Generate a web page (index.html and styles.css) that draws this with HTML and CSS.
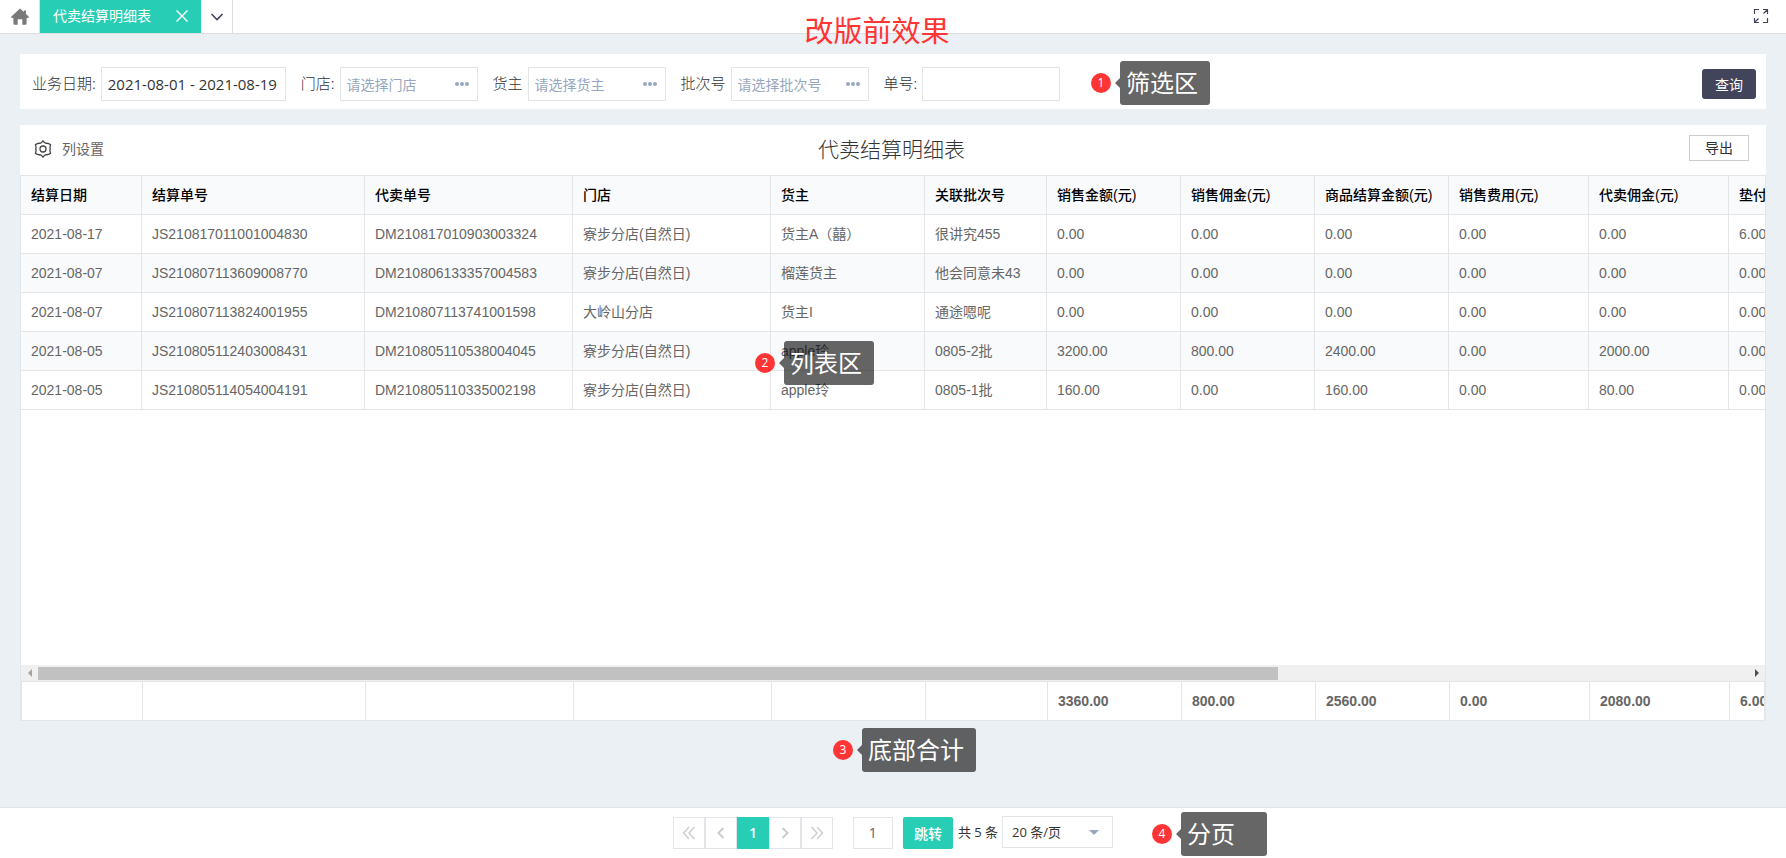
FILE: index.html
```html
<!DOCTYPE html>
<html lang="zh-CN">
<head>
<meta charset="utf-8">
<title>代卖结算明细表</title>
<link rel="stylesheet" href="styles.css">
</head>
<body>
<header class="topbar">
  <a class="home" href="#" aria-label="首页">
    <svg width="18" height="18" viewBox="0 0 18 18"><path fill="#7a7a7a" d="M9 .6 12.800 4V2.400H15V6L17.600 8.600V10H15.600V15.600Q15.600 16.800 14.400 16.800H11.300V11.200H6.700V16.800H3.600Q2.400 16.800 2.400 15.600V10H.4V8.600Z"/></svg>
  </a>
  <div class="tab">
    <span>代卖结算明细表</span>
    <button class="tab-close" aria-label="关闭"><svg width="12" height="12" viewBox="0 0 12 12"><path d="M.5.5l11 11M11.500.500l-11 11" stroke="#fff" stroke-width="1.400" fill="none"/></svg></button>
  </div>
  <button class="tab-more" aria-label="更多"><svg width="14" height="8" viewBox="0 0 14 8"><path d="M1.500 1 7 6.500 12.500 1" stroke="#41445b" stroke-width="1.600" fill="none"/></svg></button>
  <button class="fullscreen" aria-label="全屏"><svg width="16" height="16" viewBox="0 0 16 16"><path d="M1.500 6V1.500H6M10 1.500h4.500V6M14.500 1.500 10.500 5.500M14.500 10v4.500H10M6 14.500H1.500V10M1.500 14.500l4-4" stroke="#41445b" stroke-width="1.200" fill="none"/></svg></button>
</header>
<h1 class="caption">改版前效果</h1>

<main class="page">
  <form class="filters">
    <div class="field"><label for="date">业务日期:</label><input class="date" id="date" value="2021-08-01 - 2021-08-19"></div>
    <div class="field"><label for="store">门店:</label><div class="picker"><input id="store" placeholder="请选择门店"><i></i><i></i><i></i></div></div>
    <div class="field"><label for="owner">货主</label><div class="picker"><input id="owner" placeholder="请选择货主"><i></i><i></i><i></i></div></div>
    <div class="field"><label for="batch">批次号</label><div class="picker"><input id="batch" placeholder="请选择批次号"><i></i><i></i><i></i></div></div>
    <div class="field"><label for="order">单号:</label><div class="picker"><input id="order"></div></div>
    <button class="query" type="button">查询</button>
    <div class="note note-filter"><b>1</b><span>筛选区</span></div>
  </form>

  <section class="report">
    <div class="report-head">
      <button class="columns"><svg width="18" height="18" viewBox="0 0 18 18" fill="none" stroke="#444" stroke-width="1.300" stroke-linejoin="round"><path d="M9 .8Q10.200 2.900 12 3.300 14.500 3 16.600 4.700 15.600 7 16.200 9 15.600 11 16.600 13.300 14.500 15 12 14.700 10.200 15.100 9 17.200 7.800 15.100 6 14.700 3.500 15 1.400 13.300 2.400 11 1.800 9 2.400 7 1.400 4.700 3.500 3 6 3.300 7.800 2.900 9 .8Z"/><circle cx="9" cy="9" r="3"/></svg>列设置</button>
      <h2>代卖结算明细表</h2>
      <button class="export">导出</button>
    </div>
    <div class="grid">
      <div class="grid-body">
        <table>
          <colgroup><col class="w-date"><col class="w-js"><col class="w-dm"><col class="w-store"><col class="w-owner"><col class="w-batch"><col class="w-sum"><col class="w-sum"><col class="w-sum"><col class="w-fee"><col class="w-fee"><col class="w-fee"></colgroup>
          <thead><tr><th>结算日期</th><th>结算单号</th><th>代卖单号</th><th>门店</th><th>货主</th><th>关联批次号</th><th>销售金额(元)</th><th>销售佣金(元)</th><th>商品结算金额(元)</th><th>销售费用(元)</th><th>代卖佣金(元)</th><th>垫付费用(元)</th></tr></thead>
          <tbody>
            <tr><td>2021-08-17</td><td>JS210817011001004830</td><td>DM210817010903003324</td><td>寮步分店(自然日)</td><td>货主A（囍）</td><td>很讲究455</td><td>0.00</td><td>0.00</td><td>0.00</td><td>0.00</td><td>0.00</td><td>6.00</td></tr>
            <tr><td>2021-08-07</td><td>JS210807113609008770</td><td>DM210806133357004583</td><td>寮步分店(自然日)</td><td>榴莲货主</td><td>他会同意未43</td><td>0.00</td><td>0.00</td><td>0.00</td><td>0.00</td><td>0.00</td><td>0.00</td></tr>
            <tr><td>2021-08-07</td><td>JS210807113824001955</td><td>DM210807113741001598</td><td>大岭山分店</td><td>货主I</td><td>通途嗯呢</td><td>0.00</td><td>0.00</td><td>0.00</td><td>0.00</td><td>0.00</td><td>0.00</td></tr>
            <tr><td>2021-08-05</td><td>JS210805112403008431</td><td>DM210805110538004045</td><td>寮步分店(自然日)</td><td>apple玲</td><td>0805-2批</td><td>3200.00</td><td>800.00</td><td>2400.00</td><td>0.00</td><td>2000.00</td><td>0.00</td></tr>
            <tr><td>2021-08-05</td><td>JS210805114054004191</td><td>DM210805110335002198</td><td>寮步分店(自然日)</td><td>apple玲</td><td>0805-1批</td><td>160.00</td><td>0.00</td><td>160.00</td><td>0.00</td><td>80.00</td><td>0.00</td></tr>
          </tbody>
        </table>
      </div>
      <div class="scrollbar">
        <span class="arrow arrow-left"></span>
        <div class="track"><div class="thumb"></div></div>
        <span class="arrow arrow-right"></span>
      </div>
      <div class="totals">
        <table>
          <colgroup><col class="w-date"><col class="w-js"><col class="w-dm"><col class="w-store"><col class="w-owner"><col class="w-batch"><col class="w-sum"><col class="w-sum"><col class="w-sum"><col class="w-fee"><col class="w-fee"><col class="w-fee"></colgroup>
          <tbody><tr><td></td><td></td><td></td><td></td><td></td><td></td><td>3360.00</td><td>800.00</td><td>2560.00</td><td>0.00</td><td>2080.00</td><td>6.00</td></tr></tbody>
        </table>
      </div>
    </div>
    <div class="note note-list"><b>2</b><span>列表区</span></div>
    <div class="note note-total"><b>3</b><span>底部合计</span></div>
  </section>
</main>

<footer class="pagebar">
  <nav class="pages" aria-label="分页">
    <button aria-label="首页"><svg width="14" height="14" viewBox="0 0 14 14"><path d="M7 1 1.500 7 7 13M12.500 1 7 7l5.500 6"/></svg></button>
    <button aria-label="上一页"><svg class="single" width="8" height="14" viewBox="0 0 8 14"><path d="M6.500 2 1.500 7l5 5"/></svg></button>
    <button class="current">1</button>
    <button aria-label="下一页"><svg class="single" width="8" height="14" viewBox="0 0 8 14"><path d="M1.500 2 6.500 7l-5 5"/></svg></button>
    <button aria-label="末页"><svg width="14" height="14" viewBox="0 0 14 14"><path d="M1.500 1 7 7l-5.500 6M7 1l5.500 6L7 13"/></svg></button>
  </nav>
  <input class="page-no" value="1" aria-label="页码">
  <button class="jump">跳转</button>
  <span class="count">共 5 条</span>
  <div class="size"><select aria-label="每页条数"><option>20 条/页</option></select></div>
  <div class="note note-pages"><b>4</b><span>分页</span></div>
</footer>
</body>
</html>
```

FILE: styles.css
```css
* { box-sizing: border-box; }
body {
  margin: 0;
  min-height: 100vh;
  display: flex;
  flex-direction: column;
  position: relative;
  overflow-x: hidden;
  background: #ebf0f4;
  color: #333;
  font: 14px/20px "Liberation Sans", "Noto Sans CJK SC", sans-serif;
}
button, input, select { font: inherit; color: inherit; margin: 0; }
button { border: 0; background: none; padding: 0; cursor: pointer; }
svg { display: block; }

/* top bar */
.topbar {
  height: 34px;
  display: flex;
  background: #fff;
  border-bottom: 1px solid #dcdee0;
}
.home {
  width: 40px;
  display: flex;
  align-items: center;
  justify-content: center;
  border-right: 1px solid #dcdee0;
}
.tab {
  width: 161px;
  padding: 0 13px 2px;
  display: flex;
  align-items: center;
  justify-content: space-between;
  background: #27ceb5;
  color: #fff;
}
.tab-more {
  width: 32px;
  display: flex;
  align-items: center;
  justify-content: center;
  border-right: 1px solid #dcdee0;
}
.fullscreen { margin-left: auto; padding: 0 17px 2px; }
.caption {
  position: absolute;
  top: 12px;
  left: 0;
  right: 32px;
  margin: 0;
  text-align: center;
  color: #ff3434;
  font-size: 29px;
  line-height: 40px;
  font-weight: 400;
}

/* page */
.page {
  flex: 1;
  display: flex;
  flex-direction: column;
  gap: 16px;
  padding: 20px 20px 86px;
}
.filters {
  position: relative;
  display: flex;
  align-items: center;
  gap: 15px;
  height: 55px;
  padding: 4px 10px 0 12px;
  background: #fff;
}
.field { display: flex; align-items: center; gap: 5px; font-size: 15px; }
.field label { font-family: "Noto Sans CJK SC", sans-serif; font-weight: 300; padding-bottom: 1px; }
.date, .picker {
  height: 34px;
  border: 1px solid #e2e4e6;
  background: #fff;
}
.date { width: 185px; padding: 0 6px; font-family: "Open Sans", sans-serif; }
.picker { width: 138px; display: flex; align-items: center; gap: 1px; padding: 0 8px 0 6px; }
.picker input {
  flex: 1;
  min-width: 0;
  height: 32px;
  padding: 3px 0 0;
  border: 0;
  background: none;
  font-size: 14px;
}
.picker input::placeholder { color: #98a7c0; opacity: 1; }
.picker i { width: 4px; height: 4px; border-radius: 50%; background: #98a7c0; }
.query {
  width: 54px;
  height: 30px;
  padding-top: 2px;
  margin-left: auto;
  border-radius: 3px;
  background: #41445b;
  color: #fff;
}

/* report */
.report { position: relative; flex: 1; display: flex; flex-direction: column; background: #fff; }
.report-head {
  height: 50px;
  display: grid;
  grid-template-columns: 1fr auto 1fr;
  align-items: center;
  padding: 0 17px 0 14px;
}
.columns { display: flex; align-items: center; gap: 10px; padding-bottom: 2px; color: #666; justify-self: start; }
.report-head h2 { margin: 0; font-size: 21px; line-height: 30px; font-weight: 300; }
.export {
  justify-self: end;
  width: 60px;
  height: 26px;
  margin-bottom: 4px;
  border: 1px solid #ccc;
}
.grid {
  flex: 1;
  display: flex;
  flex-direction: column;
  border: 1px solid #e4e5e7;
}
.grid-body { flex: 1; overflow: hidden; }
table { table-layout: fixed; width: 1848px; border-collapse: separate; border-spacing: 0; }
.w-date { width: 121px; }
.w-js { width: 223px; }
.w-dm { width: 208px; }
.w-store { width: 198px; }
.w-owner { width: 154px; }
.w-batch { width: 122px; }
.w-sum { width: 134px; }
.w-fee { width: 140px; }
th, td {
  height: 39px;
  padding: 0 10px 1px;
  border-right: 1px solid #e4e5e7;
  border-bottom: 1px solid #e4e5e7;
  text-align: left;
  white-space: nowrap;
}
th { background: #f9fafc; color: #000; font-weight: 500; }
td { color: #666; }
tbody tr:nth-child(even) { background: #f9fafc; }
.scrollbar { display: flex; height: 16px; background: #f0f0f0; }
.track { flex: 1; padding: 2px 0 1px; }
.thumb { width: 72.5%; height: 13px; background: #c1c1c1; }
.arrow { width: 17px; display: flex; align-items: center; justify-content: center; }
.arrow::before { content: ""; border: 4px solid transparent; }
.arrow-left::before { border-left: 0; border-right-color: #a3a3a3; }
.arrow-right::before { border-right: 0; border-left-color: #505050; }
.totals {
  overflow: hidden;
  border: 1px solid #e4e5e7;
  border-bottom: 0;
}
.totals td { height: 38px; border-bottom: 0; font-weight: 700; }

/* pagination */
.pagebar {
  position: relative;
  height: 51px;
  display: flex;
  align-items: center;
  justify-content: center;
  border-top: 1px solid #e1e3e6;
  background: #fff;
}
.pages { display: flex; }
.pages button {
  width: 32px;
  height: 32px;
  display: flex;
  align-items: center;
  justify-content: center;
  border: 1px solid #e1e5ea;
}
.pages svg { fill: none; stroke: #ccc; stroke-width: 1.4; }
.pages .single { stroke-width: 2; }
.pages .current { background: #27ceb5; border-color: #27ceb5; color: #fff; font-family: "Open Sans", sans-serif; font-weight: 600; }
.page-no {
  width: 40px;
  height: 32px;
  margin: 0 10px 0 20px;
  padding: 0 0 2px;
  border: 1px solid #e1e5ea;
  text-align: center;
  color: #666;
  font-size: 15px;
  font-family: "Open Sans", sans-serif;
}
.jump { width: 50px; height: 32px; padding-top: 1px; border-radius: 2px; background: #27ceb5; color: #fff; font-weight: 500; }
.count { margin: 0 4px 0 5px; padding-bottom: 2px; font-size: 13px; font-family: "Open Sans", "Noto Sans CJK SC", sans-serif; }
.size { position: relative; margin-bottom: 2px; }
.size select {
  width: 111px;
  height: 32px;
  padding: 0 9px;
  border: 1px solid #e1e5ea;
  border-radius: 0;
  background: #fff;
  appearance: none;
  font-size: 13px;
  font-family: "Open Sans", "Noto Sans CJK SC", sans-serif;
}
.size::after {
  content: "";
  position: absolute;
  right: 14px;
  top: 14px;
  border: 5px solid transparent;
  border-top-color: #98a7c0;
  border-bottom: 0;
}

/* annotation callouts */
.note { position: absolute; display: flex; align-items: center; gap: 9px; }
.note b {
  width: 20px;
  height: 20px;
  border-radius: 50%;
  background: #ff3434;
  color: #fff;
  font: 12px/20px "Open Sans", sans-serif;
  text-align: center;
}
.note span {
  position: relative;
  height: 44px;
  min-width: 86px;
  padding: 1px 12px 0 6px;
  border-radius: 3px;
  background: rgba(0, 0, 0, .6);
  color: #fff;
  font-size: 24px;
  line-height: 44px;
}
.note span::before {
  content: "";
  position: absolute;
  left: -5px;
  top: 17px;
  border: 5px solid transparent;
  border-left: 0;
  border-right-color: rgba(0, 0, 0, .6);
}
.note-filter { left: 1071px; top: 7px; }
.note-list { left: 735px; top: 216px; }
.note-total { left: 813px; top: 603px; }
.note-pages { left: 1152px; top: 4px; }
```
